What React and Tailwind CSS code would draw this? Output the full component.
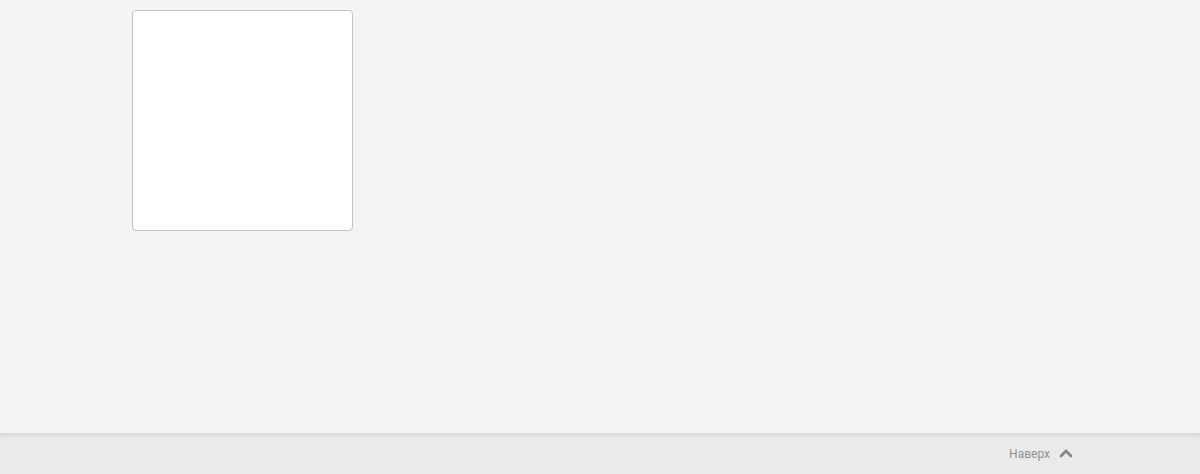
import React from 'react';

const ChevronUp = (props) => (
    <svg xmlns="http://www.w3.org/2000/svg" width="14" height="10" viewBox="0 0 14 10" fill="none" stroke="currentColor" strokeWidth="2.8" strokeLinecap="round" strokeLinejoin="round" {...props}><path d="M2 8l5-5 5 5" /></svg>
);

export default function App() {
    return (
        <div className="min-h-[474px] flex flex-col bg-[#f4f4f4] font-['Roboto',sans-serif]">
            <main className="h-[433px]">
                <div className="w-[936px] mx-auto pt-[10px]">
                    {/* Empty card */}
                    <div className="w-[221px] h-[221px] bg-white border border-[#c2c2c2] rounded-[4px]" />
                </div>
            </main>

            <footer className="h-[41px] bg-[#eaeaea] border-t border-[#d8d8d8] shadow-[inset_0_4px_6px_-3px_rgba(0,0,0,0.08)]">
                <div className="w-[936px] mx-auto h-full flex items-center justify-end">
                    <a href="#" className="flex items-center gap-[9px] text-[12px] text-[#909090] mr-[-5px]">
                        <span>Наверх</span>
                        <ChevronUp className="text-[#858585] mt-[-2px]" />
                    </a>
                </div>
            </footer>
        </div>
    );
}
